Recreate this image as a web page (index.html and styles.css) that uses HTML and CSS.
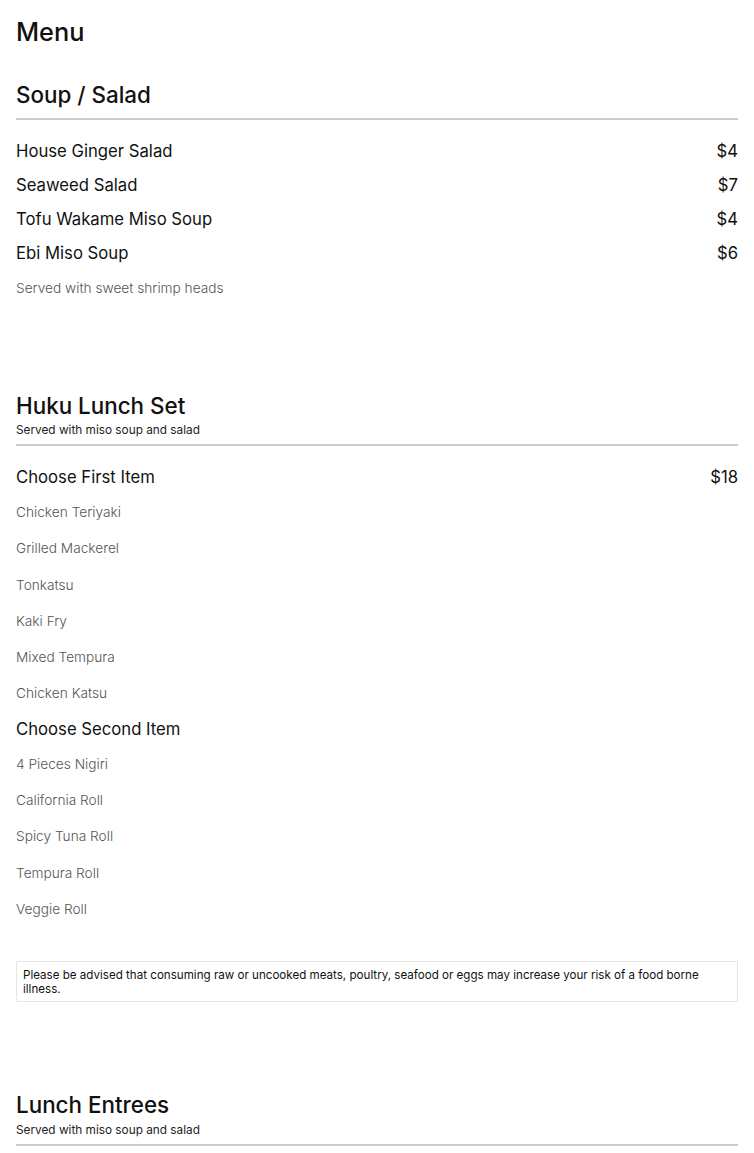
FILE: index.html
```html
<!DOCTYPE html>
<html>
<head>
<meta charset="utf-8">
<link rel="stylesheet" href="styles.css">
</head>
<body>
<h1 class="title">Menu</h1>

<section class="section first">
  <div class="sec-head">
    <h2 class="sec-title">Soup / Salad</h2>
  </div>
  <div class="row"><span>House Ginger Salad</span><span>$4</span></div>
  <div class="row"><span>Seaweed Salad</span><span>$7</span></div>
  <div class="row"><span>Tofu Wakame Miso Soup</span><span>$4</span></div>
  <div class="row"><span>Ebi Miso Soup</span><span>$6</span></div>
  <div class="sub">Served with sweet shrimp heads</div>
</section>

<section class="section second">
  <div class="sec-head">
    <h2 class="sec-title">Huku Lunch Set</h2>
    <div class="sec-sub">Served with miso soup and salad</div>
  </div>
  <div class="row"><span>Choose First Item</span><span>$18</span></div>
  <div class="sub">Chicken Teriyaki</div>
  <div class="sub">Grilled Mackerel</div>
  <div class="sub">Tonkatsu</div>
  <div class="sub">Kaki Fry</div>
  <div class="sub">Mixed Tempura</div>
  <div class="sub">Chicken Katsu</div>
  <div class="row"><span>Choose Second Item</span></div>
  <div class="sub">4 Pieces Nigiri</div>
  <div class="sub">California Roll</div>
  <div class="sub">Spicy Tuna Roll</div>
  <div class="sub">Tempura Roll</div>
  <div class="sub">Veggie Roll</div>
  <div class="notice">Please be advised that consuming raw or uncooked meats, poultry, seafood or eggs may increase your risk of a food borne illness.</div>
</section>

<section class="section last">
  <div class="sec-head">
    <h2 class="sec-title">Lunch Entrees</h2>
    <div class="sec-sub">Served with miso soup and salad</div>
  </div>
</section>
</body>
</html>
```

FILE: styles.css
```css
html, body {
  margin: 0;
  padding: 0;
  background: #fff;
}
body {
  padding: 16px 16px 0;
  font-family: Inter, "Noto Sans", sans-serif;
  color: #111;
}
.title {
  margin: 0;
  font-size: 25.3px;
  line-height: 31px;
  font-weight: 500;
}
.section {
  margin-top: 84px;
}
.section.first {
  margin-top: 33px;
}
.section.second {
  margin-top: 84.5px;
}
.section.last {
  margin-top: 88px;
}
.sec-head {
  border-bottom: 2px solid #cccccc;
  padding-bottom: 9px;
  margin-bottom: 14px;
}
.last .sec-head {
  padding-bottom: 10px;
}
.sec-title {
  margin: 0;
  font-size: 22.4px;
  line-height: 29px;
  font-weight: 500;
}
.sec-sub {
  margin-top: 3.5px;
  font-size: 11.8px;
  line-height: 15px;
  color: #222;
  margin-bottom: -3.5px;
}
.row {
  display: flex;
  justify-content: space-between;
  align-items: center;
  height: 34px;
  font-size: 16.7px;
  color: #111;
}
.sub {
  height: 36.3px;
  display: flex;
  align-items: center;
  font-size: 13.7px;
  font-weight: 300;
  color: #555;
}
.notice {
  margin-top: 34px;
  border: 1px solid #e6e6e6;
  padding: 5.5px 6px;
  font-size: 11.6px;
  line-height: 14px;
  color: #111;
}
```
